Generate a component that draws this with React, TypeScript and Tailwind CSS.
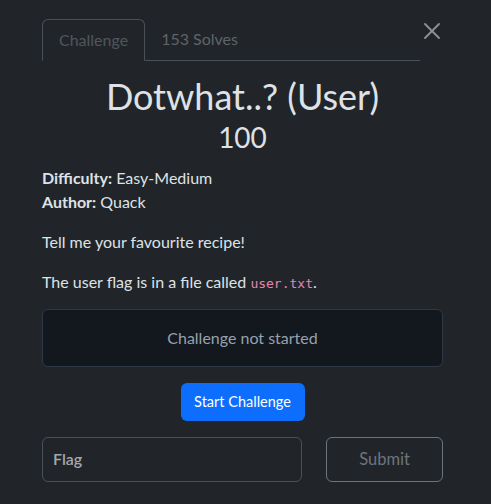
export default function App() {
  return (
    <div className="h-[504px] w-[491px] bg-[#212529] pl-[42px] pr-[48px] pt-[19px] font-['Lato',sans-serif] text-[16px] leading-[1.5] text-[#dee2e6]">
      {/* Tabs + close */}
      <div className="flex items-start">
        <div className="flex w-[378px] border-b border-[#495057]">
          <div className="-mb-px rounded-t-[6px] border border-b-[#212529] border-[#495057] px-4 py-2 text-[#51565c]">
            Challenge
          </div>
          <div className="px-4 py-2 text-[#5e646a]">153 Solves</div>
        </div>
        <button className="ml-[4px] mt-[4px] text-[#8e9194]">
          <svg width="16" height="16" viewBox="0 0 16 16" stroke="currentColor" strokeWidth="1.8" strokeLinecap="round">
            <line x1="1" y1="1" x2="15" y2="15" />
            <line x1="15" y1="1" x2="1" y2="15" />
          </svg>
        </button>
      </div>

      {/* Title */}
      <div className="mt-[14px] text-center">
        <h2 className="text-[36px] leading-[1.2] font-normal">Dotwhat..? (User)</h2>
        <h3 className="mt-[3px] text-[28px] leading-[1.2] font-normal">100</h3>
      </div>

      {/* Meta */}
      <div className="mt-[11px]">
        <p>
          <span className="font-bold">Difficulty:</span> Easy-Medium
        </p>
        <p>
          <span className="font-bold">Author:</span> Quack
        </p>
      </div>

      <p className="mt-[16px]">Tell me your favourite recipe!</p>
      <p className="mt-[16px]">
        The user flag is in a file called{' '}
        <code className="font-['DejaVu_Sans_Mono',monospace] text-[13px] text-[#e685b5]">user.txt</code>.
      </p>

      {/* Status */}
      <div className="mt-[15px] flex h-[58px] items-center justify-center rounded-[6px] border border-[#2f3847] bg-[#13171e] text-[#95a2af]">
        Challenge not started
      </div>

      <div className="mt-[16px] flex justify-center">
        <button className="h-[38px] w-[124px] rounded-[6px] bg-[#0d6efd] text-[14.5px] text-white">
          Start Challenge
        </button>
      </div>

      {/* Flag form */}
      <div className="mt-[16px] flex gap-[24px]">
        <div className="flex h-[45px] w-[260px] items-center rounded-[6px] border border-[#495057] px-[10px] text-[16px] font-semibold text-[#a3a8ad]">
          Flag
        </div>
        <button className="h-[45px] flex-1 rounded-[6px] border border-[#6c757d] text-[16.5px] text-[#6c757d]">
          Submit
        </button>
      </div>
    </div>
  );
}
